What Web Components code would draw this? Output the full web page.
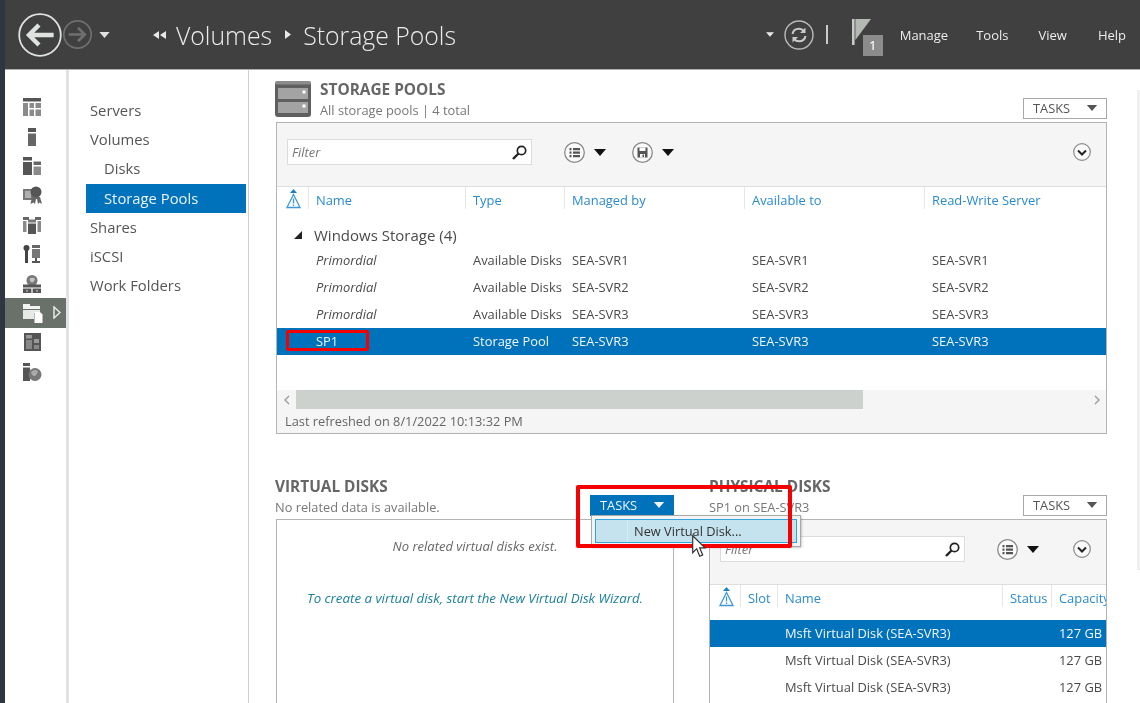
<!DOCTYPE html>
<html>
<head>
<meta charset="utf-8">
<title>Server Manager</title>
<style>
  html, body { margin: 0; padding: 0; background: #fff; }
  body { font-family: "Open Sans", "Noto Sans", sans-serif; font-size: 12.8px; color: #4a4a4a; }
</style>
</head>
<body>
<sm-app>
  <sm-header slot="header"></sm-header>
  <sm-rail slot="rail"></sm-rail>
  <sm-nav slot="nav">
    <sm-nav-item>Servers</sm-nav-item>
    <sm-nav-item>Volumes</sm-nav-item>
    <sm-nav-item sub>Disks</sm-nav-item>
    <sm-nav-item sub active>Storage Pools</sm-nav-item>
    <sm-nav-item>Shares</sm-nav-item>
    <sm-nav-item>iSCSI</sm-nav-item>
    <sm-nav-item>Work Folders</sm-nav-item>
  </sm-nav>

  <sm-section heading="STORAGE POOLS" sub="All storage pools | 4 total">
    <sm-icon slot="icon" name="pool" w="36" h="36"></sm-icon>
    <sm-tasks slot="tasks"></sm-tasks>
    <sm-table style="--cols: 31px 157px 99px 180px 180px 1fr; height: 312px; margin-left: 1px">
      <sm-toolbar slot="toolbar">
        <sm-icon name="list" w="21" h="21" style="margin-left: 32px"></sm-icon>
        <sm-icon name="caret" w="12" h="7" style="margin-left: 9px; color: #111"></sm-icon>
        <sm-icon name="save" w="21" h="21" style="margin-left: 26px"></sm-icon>
        <sm-icon name="caret" w="12" h="7" style="margin-left: 9px; color: #111"></sm-icon>
      </sm-toolbar>
      <sm-row head slot="head">
        <span><sm-icon name="alert" w="15" h="20" style="margin: 2px 0 0 9px"></sm-icon></span><span>Name</span><span>Type</span><span>Managed by</span><span>Available to</span><span>Read-Write Server</span>
      </sm-row>
      <sm-group>Windows Storage (4)</sm-group>
      <sm-row><span></span><span class="em">Primordial</span><span>Available Disks</span><span>SEA-SVR1</span><span>SEA-SVR1</span><span>SEA-SVR1</span></sm-row>
      <sm-row><span></span><span class="em">Primordial</span><span>Available Disks</span><span>SEA-SVR2</span><span>SEA-SVR2</span><span>SEA-SVR2</span></sm-row>
      <sm-row><span></span><span class="em">Primordial</span><span>Available Disks</span><span>SEA-SVR3</span><span>SEA-SVR3</span><span>SEA-SVR3</span></sm-row>
      <sm-row selected><span></span><span>SP1</span><span>Storage Pool</span><span>SEA-SVR3</span><span>SEA-SVR3</span><span>SEA-SVR3</span></sm-row>
      <sm-hscroll slot="footer"></sm-hscroll>
      <sm-status slot="footer">Last refreshed on 8/1/2022 10:13:32 PM</sm-status>
    </sm-table>
  </sm-section>

  <sm-split>
    <sm-section heading="VIRTUAL DISKS" sub="No related data is available." style="z-index: 2">
      <sm-tasks slot="tasks" active>
        <sm-menu>New Virtual Disk...</sm-menu>
      </sm-tasks>
      <sm-empty>
        <span>No related virtual disks exist.</span>
        <a>To create a virtual disk, start the New Virtual Disk Wizard.</a>
      </sm-empty>
    </sm-section>
    <sm-section heading="PHYSICAL DISKS" sub="SP1 on SEA-SVR3">
      <sm-tasks slot="tasks"></sm-tasks>
      <sm-table style="--cols: 30px 37px 225px 49px 1fr; height: 240px">
        <sm-toolbar slot="toolbar" style="height: 65px">
          <sm-icon name="list" w="21" h="21" style="margin-left: 32px"></sm-icon>
          <sm-icon name="caret" w="12" h="7" style="margin-left: 9px; color: #111"></sm-icon>
        </sm-toolbar>
        <sm-row head tall slot="head">
          <span><sm-icon name="alert" w="15" h="20" style="margin: 2px 0 0 9px"></sm-icon></span><span>Slot</span><span>Name</span><span>Status</span><span>Capacity</span>
        </sm-row>
        <sm-row selected><span></span><span></span><span>Msft Virtual Disk (SEA-SVR3)</span><span></span><span>127 GB</span></sm-row>
        <sm-row><span></span><span></span><span>Msft Virtual Disk (SEA-SVR3)</span><span></span><span>127 GB</span></sm-row>
        <sm-row><span></span><span></span><span>Msft Virtual Disk (SEA-SVR3)</span><span></span><span>127 GB</span></sm-row>
      </sm-table>
    </sm-section>
  </sm-split>

  <sm-callout slot="over" style="left: 286px; top: 330px; width: 77px; height: 15px; border-width: 3px; border-radius: 2px"></sm-callout>
  <sm-callout slot="over" style="left: 576px; top: 485px; width: 208px; height: 55px; border-width: 4px; border-radius: 2px"></sm-callout>
  <sm-icon slot="over" name="cursor" w="14" h="22" style="position: absolute; left: 692px; top: 535px; z-index: 3"></sm-icon>
</sm-app>

<script>
const ICONS = {
  back: `<circle cx="20" cy="20" r="19.8" fill="none" stroke="#dfe3e0" stroke-width="1.7"/><path d="M33 20H10M19 10.5 9.500 20l9.500 9.500" fill="none" stroke="#dfe3e0" stroke-width="4.200"/>`,
  forward: `<circle cx="14" cy="14" r="13.200" fill="none" stroke="#6e706e" stroke-width="1.600"/><path d="M5.500 14H21M14.500 7.500 21 14l-6.500 6.500" fill="none" stroke="#6e706e" stroke-width="2.600"/>`,
  caret: `<path d="M0 0h12L6 7z" fill="currentColor"/>`,
  crumbs: `<path d="M6 0v8L0 4zM13 0v8L7 4z" fill="#e8e8e8"/>`,
  crumb: `<path d="M0 0v9l6-4.500z" fill="#e8e8e8"/>`,
  refresh: `<circle cx="15" cy="15" r="14" fill="none" stroke="#b8bbb8" stroke-width="1.400"/><path d="M8.500 14c.6-3.400 3.200-5.300 6.500-5.300 2.200 0 3.800.9 5 2.300M21.500 16c-.6 3.400-3.200 5.300-6.500 5.300-2.200 0-3.800-.9-5-2.300" fill="none" stroke="#c8cbc8" stroke-width="2"/><path d="M21.500 7.500v5.500h-5.500zM8.500 22.500v-5.500h5.500z" fill="#c8cbc8"/>`,
  flag: `<path d="M0 0h2.600v26H0z" fill="#c6cbc6"/><path d="M3.400 0H19L3.400 21z" fill="#b4b9b4"/>`,
  pool: `<path d="M4 0h28a4 4 0 0 1 4 4v29a3 3 0 0 1-3 3H3a3 3 0 0 1-3-3V4a4 4 0 0 1 4-4z" fill="#5f5f5f"/><rect x="0" y="0" width="36" height="3.500" rx="2" fill="#8b8b8b"/><rect x="3" y="7" width="30" height="11" fill="#a3a3a3"/><rect x="3" y="21" width="30" height="11" fill="#a3a3a3"/><rect x="27.500" y="9.500" width="3" height="3" fill="#fff"/><rect x="27.500" y="23.500" width="3" height="3" fill="#fff"/>`,
  list: `<circle cx="10.500" cy="10.500" r="9.800" fill="#fafafa" stroke="#8a8a8a" stroke-width="1.300"/><path d="M5.500 6h2v2.200h-2zM5.500 9.500h2v2.200h-2zM5.500 13h2v2.200h-2zM9 6h7v2.200H9zM9 9.500h7v2.200H9zM9 13h7v2.200H9z" fill="#555"/>`,
  save: `<circle cx="10.500" cy="10.500" r="9.800" fill="#fafafa" stroke="#8a8a8a" stroke-width="1.300"/><path d="M5.500 5.500h10v10h-10z" fill="#555"/><path d="M7.500 5.500h6V9h-6zM8 12h5v3.500H8z" fill="#fafafa"/><path d="M10.500 12.500h1.500v2.500h-1.500z" fill="#555"/>`,
  chevron: `<circle cx="9" cy="9" r="8.300" fill="#fafafa" stroke="#8a8a8a" stroke-width="1.200"/><path d="M5 7.500 9 11.500l4-4" fill="none" stroke="#222" stroke-width="2"/>`,
  search: `<circle cx="9.500" cy="5.500" r="4.200" fill="none" stroke="#222" stroke-width="1.700"/><path d="M6.500 8.500 1 14" stroke="#222" stroke-width="2.400"/>`,
  alert: `<path d="M7.500 0 11 4H4z" fill="#1a7fc4"/><path d="M7.500 5.500 14 18.500H1z" fill="none" stroke="#3b99d8" stroke-width="1.300"/><path d="M7.500 9.500v5M7.500 15.500v1.500" stroke="#3b99d8" stroke-width="1.300"/>`,
  cursor: `<path d="M.7.700v17l4-4 3 7.500 3-1.300-3-7h5.300z" fill="#fff" stroke="#333" stroke-width="1.200"/>`,
  r1: `<path d="M0 0h18v3.500H0z" fill="#555"/><path d="M0 5h5v13H0z" fill="#8a8a8a"/><path d="M6.500 5H11v5H6.500zM12.500 5H18v5h-5.500zM6.500 11.500H11V18H6.500zM12.500 11.500H18V18h-5.500z" fill="#8a8a8a"/>`,
  r2: `<path d="M5 0h8v4H5z" fill="#555"/><path d="M5 5.500h8V18H5z" fill="#666"/>`,
  r3: `<path d="M0 0h9v3.500H0zM0 5h9v13H0z" fill="#555"/><path d="M10.500 4.500H18V8h-7.500z" fill="#666"/><path d="M10.500 9.500H18V18h-7.500z" fill="#8a8a8a"/>`,
  r4: `<path d="M0 3h10v11H0z" fill="#777"/><path d="M2 5h6v7H2z" fill="#b0b0b0"/><circle cx="13" cy="6" r="5.500" fill="#555"/><path d="M9 11l-1.500 7 3-1.500 1.500 1.500 1-5h1l1 5 1.500-1.500 2.500 1.500-2-7z" fill="#666"/>`,
  r5: `<path d="M0 1h6v3H0zM12 1h6v3h-6z" fill="#666"/><path d="M0 5h3.500v11H0zM14.500 5H18v11h-3.500z" fill="#8a8a8a"/><path d="M5 3.500h8v3H5z" fill="#777"/><path d="M5 7.500h8V18H5z" fill="#555"/>`,
  r6: `<circle cx="3.500" cy="3" r="3" fill="#444"/><path d="M2 4h3v14H2z" fill="#444"/><path d="M9 0h8v3H9z" fill="#666"/><path d="M9 4h8v9H9z" fill="#777"/><path d="M12 13h2v3h3v2H9v-2h3z" fill="#555"/>`,
  r7: `<circle cx="9" cy="5.500" r="5.500" fill="#777"/><path d="M6.500 3.500c1.500-1 4-1 5.500 0-.5 2-1 3.500-3 4-1.500-.5-2.500-2.500-2.500-4z" fill="#c4c4c4"/><path d="M0 9.500h18v3H0z" fill="#555"/><path d="M0 13.500h8.400V18H0zM9.600 13.500H18V18H9.600z" fill="#555"/><path d="M3 15.300h2v1.200H3zM13 15.300h2v1.200h-2z" fill="#c0c0c0"/>`,
  r8: `<path d="M0 0h7v2h10v3H0z" fill="#f2f3f2"/><path d="M0 6h17v3h-6v6H0z" fill="#e7e9e7"/><path d="M11.500 8H17l2.500 2.500V19h-8z" fill="#fff"/>`,
  r9: `<path d="M1 0h17v18H1z" fill="#555"/><path d="M3 2h6v3.500H3zM11 6h5v4h-5z" fill="#999"/><path d="M3 7h6v9H3zM11 12h5v4h-5z" fill="#888"/>`,
  r10: `<path d="M0 0h7v3H0zM0 4.500h7V18H0z" fill="#555"/><circle cx="12" cy="11.500" r="6.500" fill="#777"/><path d="M8 9c2-2 5-3 7-1-1 2-1 4-3 5-2 .5-4-2-4-4z" fill="#aaa"/>`
}

class SmIcon extends HTMLElement {
  constructor() {
    super()
    this.attachShadow({ mode: 'open' })
  }

  connectedCallback() {
    const w = this.getAttribute('w') || 18
    const h = this.getAttribute('h') || 18
    const body = ICONS[this.getAttribute('name')]
    this.shadowRoot.innerHTML = `
      <style>
        :host { display: inline-block; flex: none; width: ${w}px; height: ${h}px; line-height: 0; }
        svg { display: block; overflow: visible; }
      </style>
      <svg width="${w}" height="${h}" viewBox="0 0 ${this.getAttribute('vw') || w} ${this.getAttribute('vh') || h}">${body}</svg>
    `
  }
}

class SmApp extends HTMLElement {
  constructor() {
    super()
    this.attachShadow({ mode: 'open' })
    this.shadowRoot.innerHTML = `
      <style>
        :host {
          display: grid;
          position: relative;
          width: 1140px;
          height: 703px;
          overflow: hidden;
          grid-template-columns: 5px 61px 3px 179px 1px 1fr 3px;
          grid-template-rows: 70px 20px 1fr;
          background: #fff;
          filter: blur(0.3px);
        }
        .strip { grid-row: 1 / 4; grid-column: 1; background: #2e3641; }
        ::slotted([slot=header]) { grid-row: 1; grid-column: 2 / 8; }
        ::slotted([slot=rail]) { grid-row: 2 / 4; grid-column: 2; }
        .sep { grid-row: 2 / 4; grid-column: 3; background: #e2e2e2; }
        ::slotted([slot=nav]) { grid-row: 2 / 4; grid-column: 4; }
        .line { grid-row: 2 / 4; grid-column: 5; background: #cfcfcf; }
        .main { grid-row: 2 / 4; grid-column: 6; padding: 10px 30px 0 26px; min-width: 0; }
        .sb { grid-row: 3; grid-column: 7; background: #f0f0f0; height: 480px; }
      </style>
      <div class="strip"></div>
      <slot name="header"></slot>
      <slot name="rail"></slot>
      <div class="sep"></div>
      <slot name="nav"></slot>
      <div class="line"></div>
      <div class="main"><slot></slot></div>
      <div class="sb"></div>
      <slot name="over"></slot>
    `
  }
}

class SmHeader extends HTMLElement {
  constructor() {
    super()
    this.attachShadow({ mode: 'open' })
    this.shadowRoot.innerHTML = `
      <style>
        :host {
          display: flex;
          align-items: center;
          box-sizing: border-box;
          height: 70px;
          padding-left: 14px;
          background: #404040;
          border-bottom: 1px solid #b0b0b0;
          color: #ececec;
        }
        .crumb { font-size: 24.800px; font-weight: 300; white-space: nowrap; }
        .right { display: flex; align-items: center; margin-left: auto; position: relative; }
        .bar { width: 2px; height: 19px; background: #c8cbc8; margin: 0 24px 0 12px; }
        .flag { position: relative; width: 31px; height: 38px; margin-top: 6px; }
        .badge {
          position: absolute; left: 11px; top: 16px;
          width: 20px; height: 21px;
          background: #8c8c8c; color: #eee;
          font-size: 12px; font-weight: 600; line-height: 21px; text-align: center;
        }
        .menu { font-size: 13px; white-space: nowrap; }
      </style>
      <sm-icon name="back" w="42" h="42" vw="40" vh="40"></sm-icon>
      <sm-icon name="forward" w="29" h="29" vw="28" vh="28" style="margin-left: 2px"></sm-icon>
      <sm-icon name="caret" w="11" h="6" vw="12" vh="7" style="margin-left: 7px; color: #dfe1df"></sm-icon>
      <sm-icon name="crumbs" w="13" h="8" style="margin-left: 43px"></sm-icon>
      <span class="crumb" style="margin-left: 10px">Volumes</span>
      <sm-icon name="crumb" w="6" h="9" style="margin-left: 13px"></sm-icon>
      <span class="crumb" style="margin-left: 12px">Storage Pools</span>
      <div class="right">
        <sm-icon name="caret" w="8" h="5" vw="12" vh="7" style="margin-right: 10px; color: #e8e8e8"></sm-icon>
        <sm-icon name="refresh" w="30" h="30"></sm-icon>
        <div class="bar"></div>
        <div class="flag">
          <sm-icon name="flag" w="19" h="26"></sm-icon>
          <div class="badge">1</div>
        </div>
        <span class="menu" style="margin-left: 17px">Manage</span>
        <span class="menu" style="margin-left: 28px">Tools</span>
        <span class="menu" style="margin-left: 30px">View</span>
        <span class="menu" style="margin: 0 14px 0 31px">Help</span>
      </div>
    `
  }
}

class SmRail extends HTMLElement {
  constructor() {
    super()
    this.attachShadow({ mode: 'open' })
    const rows = [1, 2, 3, 4, 5, 6, 7, 8, 9, 10].map(n => `
      <div class="row ${n === 8 ? 'on' : ''}">
        <sm-icon name="r${n}"></sm-icon>
        ${n === 8 ? '<svg class="arrow" width="8" height="13" viewBox="0 0 8 13"><path d="M1 1v11l6-5.500z" fill="none" stroke="#e8e9e8" stroke-width="1.500"/></svg>' : ''}
      </div>`).join('')
    this.shadowRoot.innerHTML = `
      <style>
        :host { display: block; padding-top: 22.500px; }
        .row { display: flex; align-items: center; height: 29.400px; padding-left: 18px; box-sizing: border-box; }
        .on { background: #6a706a; }
        .arrow { margin-left: 12px; }
      </style>
      ${rows}
    `
  }
}

class SmNav extends HTMLElement {
  constructor() {
    super()
    this.attachShadow({ mode: 'open' })
    this.shadowRoot.innerHTML = `
      <style>
        :host { display: block; padding: 26px 2px 0 17px; }
      </style>
      <slot></slot>
    `
  }
}

class SmNavItem extends HTMLElement {
  constructor() {
    super()
    this.attachShadow({ mode: 'open' })
    this.shadowRoot.innerHTML = `
      <style>
        :host {
          display: block;
          height: 29.200px;
          line-height: 29.200px;
          padding-left: 4px;
          font-size: 14.800px;
          color: #555;
          white-space: nowrap;
        }
        :host([sub]) { padding-left: 18px; }
        :host([active]) { background: #0072bc; color: #eaf3fa; }
      </style>
      <slot></slot>
    `
  }
}

class SmSection extends HTMLElement {
  constructor() {
    super()
    this.attachShadow({ mode: 'open' })
    this.shadowRoot.innerHTML = `
      <style>
        :host { display: block; position: relative; min-width: 0; }
        .head { display: flex; height: 42px; box-sizing: border-box; }
        .titles { flex: 1; min-width: 0; }
        ::slotted([slot=icon]) { margin: 1px 9px 0 0; }
        .title { font-size: 15.400px; font-weight: 700; color: #666; line-height: 20px; }
        .sub { font-size: 12.800px; color: #777; line-height: 20px; }
      </style>
      <div class="head">
        <slot name="icon"></slot>
        <div class="titles"><div class="title"></div><div class="sub"></div></div>
        <slot name="tasks"></slot>
      </div>
      <slot></slot>
    `
  }

  connectedCallback() {
    this.shadowRoot.querySelector('.title').textContent = this.getAttribute('heading')
    this.shadowRoot.querySelector('.sub').textContent = this.getAttribute('sub')
  }
}

class SmTasks extends HTMLElement {
  constructor() {
    super()
    this.attachShadow({ mode: 'open' })
    this.shadowRoot.innerHTML = `
      <style>
        :host {
          display: block;
          position: relative;
          align-self: flex-start;
          box-sizing: border-box;
          width: 84px;
          height: 21px;
          margin-top: 17.500px;
          border: 1px solid #a8a8a8;
          background: #fff;
          color: #555;
          font-size: 12.800px;
        }
        :host([active]) { background: #0072bc; border-color: #0072bc; color: #eef6fb; }
        .btn { display: flex; align-items: center; justify-content: space-between; height: 100%; padding: 0 8px 0 9px; }
      </style>
      <div class="btn"><span>TASKS</span><sm-icon name="caret" w="12" h="6" vw="12" vh="7"></sm-icon></div>
      <slot></slot>
    `
  }
}

class SmMenu extends HTMLElement {
  constructor() {
    super()
    this.attachShadow({ mode: 'open' })
    this.shadowRoot.innerHTML = `
      <style>
        :host {
          display: block;
          position: absolute;
          left: 0;
          top: 19px;
          box-sizing: border-box;
          width: 210px;
          height: 32px;
          padding: 3px;
          background: #f4f4f4;
          border: 1px solid #a8a8a8;
          box-shadow: 1px 1px 2px rgba(0,0,0,0.2);
        }
        .item {
          box-sizing: border-box;
          height: 24px;
          line-height: 23px;
          padding-left: 38px;
          background: linear-gradient(to right, #c4e3ee 31px, #d6ecf3 31px, #d6ecf3 32px, #c4e3ee 32px);
          border: 1px solid #33a3dc;
          color: #333;
          font-size: 12.800px;
          white-space: nowrap;
        }
      </style>
      <div class="item"><slot></slot></div>
    `
  }
}

class SmTable extends HTMLElement {
  constructor() {
    super()
    this.attachShadow({ mode: 'open' })
    this.shadowRoot.innerHTML = `
      <style>
        :host {
          display: flex;
          flex-direction: column;
          box-sizing: border-box;
          border: 1px solid #b4b4b4;
          background: #fff;
        }
        .body { flex: 1; min-height: 0; overflow: hidden; }
      </style>
      <slot name="toolbar"></slot>
      <slot name="head"></slot>
      <div class="body"><slot></slot></div>
      <slot name="footer"></slot>
    `
  }
}

class SmToolbar extends HTMLElement {
  constructor() {
    super()
    this.attachShadow({ mode: 'open' })
    this.shadowRoot.innerHTML = `
      <style>
        :host {
          display: flex;
          align-items: flex-start;
          box-sizing: border-box;
          height: 64px;
          padding: 16px 15px 0 10px;
          background: #f5f5f5;
          border-bottom: 1px solid #dedede;
        }
        .filter {
          display: flex;
          align-items: center;
          justify-content: space-between;
          box-sizing: border-box;
          width: 245px;
          height: 26px;
          padding: 0 4px 0 4px;
          background: #fff;
          border: 1px solid #dcdcdc;
          color: #777;
          font-style: italic;
          font-size: 12.800px;
        }
        .icons { display: flex; align-items: center; height: 26px; }
        .end { display: flex; align-items: center; height: 26px; margin-left: auto; }
      </style>
      <div class="filter"><span>Filter</span><sm-icon name="search" w="15" h="15"></sm-icon></div>
      <div class="icons"><slot></slot></div>
      <div class="end"><sm-icon name="chevron" w="18" h="18"></sm-icon></div>
    `
  }
}

class SmRow extends HTMLElement {
  constructor() {
    super()
    this.attachShadow({ mode: 'open' })
    this.shadowRoot.innerHTML = `
      <style>
        :host {
          display: grid;
          grid-template-columns: var(--cols);
          height: 27px;
          line-height: 27px;
          font-size: 12.900px;
          color: #4a4a4a;
          overflow: hidden;
          white-space: nowrap;
        }
        ::slotted(span) { padding-left: 8px; overflow: hidden; min-width: 0; }
        ::slotted(span.em) { font-style: italic; }
        :host([selected]) { background: #0072bc; color: #f0f6fb; }
        :host([head]) { color: #2a8ace; height: 27px; }
        :host([head][tall]) { height: 35px; }
        :host([head]) ::slotted(span) { border-left: 1px solid #e6e6e6; padding-left: 7px; height: 22px; line-height: 27px; overflow: visible; }
        :host([head]) ::slotted(span:first-child) { border-left: 0; padding-left: 0; }
      </style>
      <slot></slot>
    `
  }
}

class SmGroup extends HTMLElement {
  constructor() {
    super()
    this.attachShadow({ mode: 'open' })
    this.shadowRoot.innerHTML = `
      <style>
        :host {
          display: flex;
          align-items: flex-end;
          height: 33px;
          padding-left: 17px;
          font-size: 15px;
          color: #4a4a4a;
          line-height: 24px;
        }
        svg { margin: 0 12px 8px 0; flex: none; }
      </style>
      <svg width="8" height="8" viewBox="0 0 9 9"><path d="M9 0v9H0z" fill="#222"/></svg>
      <slot></slot>
    `
  }
}

class SmHscroll extends HTMLElement {
  constructor() {
    super()
    this.attachShadow({ mode: 'open' })
    this.shadowRoot.innerHTML = `
      <style>
        :host { display: flex; align-items: stretch; height: 19px; background: #f5f5f5; }
        .btn { display: flex; align-items: center; justify-content: center; width: 19px; flex: none; }
        .thumb { width: 567px; background: #cdd1ce; flex: none; }
        .track { flex: 1; }
      </style>
      <div class="btn"><svg width="6" height="10" viewBox="0 0 6 10"><path d="M5 1 1 5l4 4" fill="none" stroke="#999" stroke-width="1.300"/></svg></div>
      <div class="thumb"></div>
      <div class="track"></div>
      <div class="btn"><svg width="6" height="10" viewBox="0 0 6 10"><path d="M1 1l4 4-4 4" fill="none" stroke="#999" stroke-width="1.300"/></svg></div>
    `
  }
}

class SmStatus extends HTMLElement {
  constructor() {
    super()
    this.attachShadow({ mode: 'open' })
    this.shadowRoot.innerHTML = `
      <style>
        :host {
          display: block;
          height: 24px;
          line-height: 24px;
          padding-left: 8px;
          background: #f5f5f5;
          color: #666;
          font-size: 12.800px;
        }
      </style>
      <slot></slot>
    `
  }
}

class SmSplit extends HTMLElement {
  constructor() {
    super()
    this.attachShadow({ mode: 'open' })
    this.shadowRoot.innerHTML = `
      <style>
        :host {
          display: grid;
          grid-template-columns: 399px 398px;
          column-gap: 35px;
          margin-top: 43px;
        }
      </style>
      <slot></slot>
    `
  }
}

class SmEmpty extends HTMLElement {
  constructor() {
    super()
    this.attachShadow({ mode: 'open' })
    this.shadowRoot.innerHTML = `
      <style>
        :host {
          display: flex;
          flex-direction: column;
          align-items: center;
          box-sizing: border-box;
          height: 240px;
          margin-left: 1px;
          padding-top: 17px;
          border: 1px solid #b4b4b4;
          font-style: italic;
          font-size: 13px;
          color: #666;
        }
        ::slotted(a) { margin-top: 34px; color: #1a7f9c; font-size: 13.300px; }
      </style>
      <slot></slot>
    `
  }
}

class SmCallout extends HTMLElement {
  constructor() {
    super()
    this.attachShadow({ mode: 'open' })
    this.shadowRoot.innerHTML = `
      <style>
        :host { display: block; position: absolute; z-index: 3; border: 3px solid #f40000; }
      </style>
    `
  }
}

customElements.define('sm-icon', SmIcon)
customElements.define('sm-app', SmApp)
customElements.define('sm-header', SmHeader)
customElements.define('sm-rail', SmRail)
customElements.define('sm-nav', SmNav)
customElements.define('sm-nav-item', SmNavItem)
customElements.define('sm-section', SmSection)
customElements.define('sm-tasks', SmTasks)
customElements.define('sm-menu', SmMenu)
customElements.define('sm-table', SmTable)
customElements.define('sm-toolbar', SmToolbar)
customElements.define('sm-row', SmRow)
customElements.define('sm-group', SmGroup)
customElements.define('sm-hscroll', SmHscroll)
customElements.define('sm-status', SmStatus)
customElements.define('sm-split', SmSplit)
customElements.define('sm-empty', SmEmpty)
customElements.define('sm-callout', SmCallout)
</script>
</body>
</html>
